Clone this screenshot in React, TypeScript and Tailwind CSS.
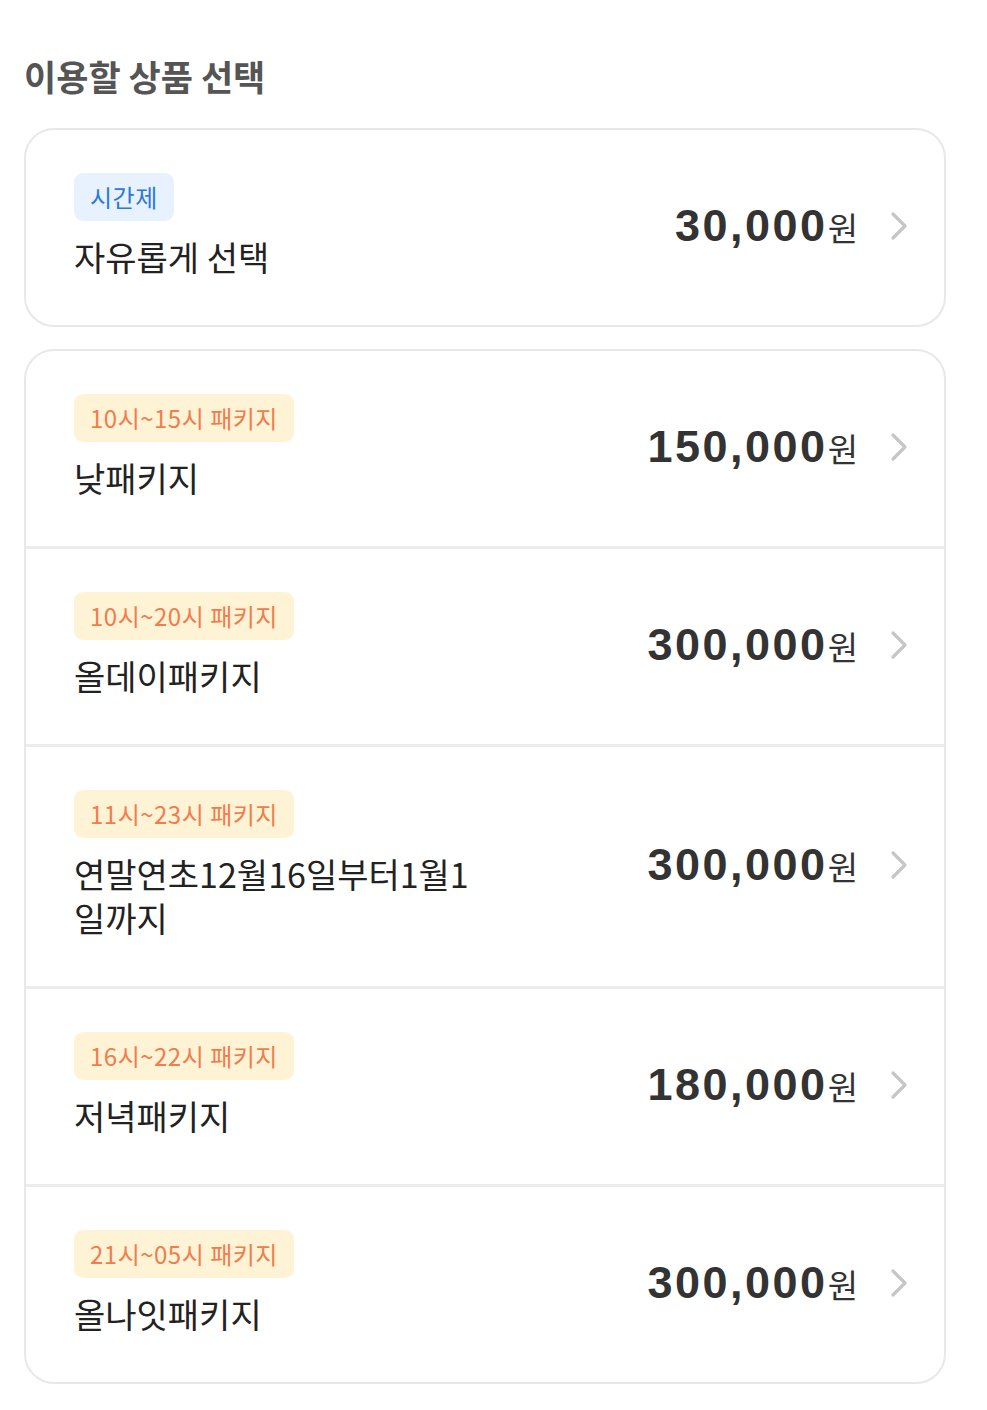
import React from "react";

type Item = { badge: string; name: string; price: string; kind: "blue" | "orange" };

const first: Item = { badge: "시간제", name: "자유롭게 선택", price: "30,000", kind: "blue" };
const packages: Item[] = [
  { badge: "10시~15시 패키지", name: "낮패키지", price: "150,000", kind: "orange" },
  { badge: "10시~20시 패키지", name: "올데이패키지", price: "300,000", kind: "orange" },
  { badge: "11시~23시 패키지", name: "연말연초12월16일부터1월1일까지", price: "300,000", kind: "orange" },
  { badge: "16시~22시 패키지", name: "저녁패키지", price: "180,000", kind: "orange" },
  { badge: "21시~05시 패키지", name: "올나잇패키지", price: "300,000", kind: "orange" },
];

function Chevron() {
  return (
    <svg width="18" height="30" viewBox="0 0 18 30" fill="none" className="shrink-0">
      <path d="M3 3 L15 15 L3 27" stroke="#c6c6c6" strokeWidth="3.2" strokeLinecap="round" strokeLinejoin="round" />
    </svg>
  );
}

function Row({ item, divider }: { item: Item; divider?: boolean }) {
  return (
    <div className={`flex items-center pl-[48px] pr-[36px] pt-[43px] pb-[46px] ${divider ? "border-t-[3px] border-[#ececec]" : ""}`}>
      <div className="flex-1 min-w-0">
        <div
          className={`inline-flex h-[48px] items-center rounded-[9px] px-[16px] text-[24px] tracking-[0.5px] ${
            item.kind === "blue" ? "bg-[#e8f2ff] text-[#2c7ad6]" : "bg-[#fff3d6] text-[#ef7d4d]"
          }`}
        >
          {item.badge}
        </div>
        <div className="mt-[14px] w-[420px] text-[34px] leading-[44px] text-[#222] break-all">{item.name}</div>
      </div>
      <div className="flex items-center gap-[32px]">
        <div className="flex items-baseline text-[#333]">
          <span
            className="text-[45px] font-bold tracking-[2.5px]"
            style={{ fontFamily: '"Liberation Sans", Arial, sans-serif' }}
          >
            {item.price}
          </span>
          <span className="text-[33px]">원</span>
        </div>
        <Chevron />
      </div>
    </div>
  );
}

export default function App() {
  return (
    <div
      className="min-h-[1410px] bg-white px-[24px] pt-[51px]"
      style={{ fontFamily: '"Noto Sans CJK KR", "Noto Sans", sans-serif' }}
    >
      <h1 className="text-[35px] font-bold leading-[50px] text-[#555]">이용할 상품 선택</h1>
      <div className="mt-[27px] w-[922px] rounded-[30px] border-[2px] border-[#e8e8e8] overflow-hidden">
        <Row item={first} />
      </div>
      <div className="mt-[22px] w-[922px] rounded-[30px] border-[2px] border-[#e8e8e8] overflow-hidden">
        {packages.map((p, i) => (
          <Row key={i} item={p} divider={i > 0} />
        ))}
      </div>
    </div>
  );
}
